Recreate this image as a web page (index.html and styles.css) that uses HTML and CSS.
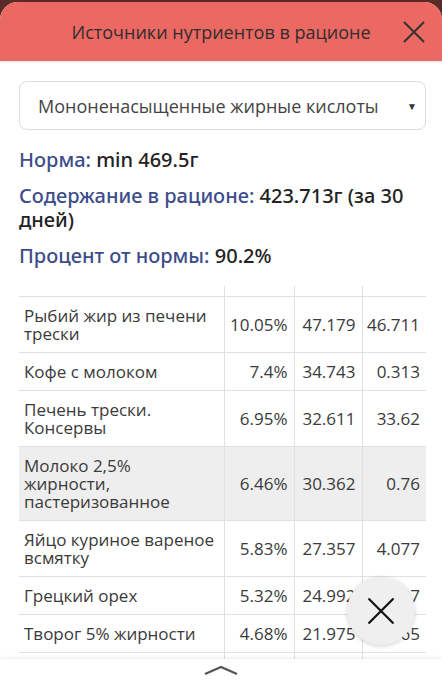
FILE: index.html
```html
<!DOCTYPE html>
<html lang="ru">
<head>
<meta charset="utf-8">
<title>Источники нутриентов в рационе</title>
<link rel="stylesheet" href="styles.css">
</head>
<body>
<div class="sheet">
  <header class="bar">
    <h1 class="bar-title">Источники нутриентов в рационе</h1>
    <button class="bar-close" aria-label="Закрыть">
      <svg viewBox="0 0 24 24" width="24" height="24"><path d="M2 2 L22 22 M22 2 L2 22" stroke="#333" stroke-width="2" fill="none"/></svg>
    </button>
  </header>
  <main class="content">
    <div class="select">
      <span class="select-text">Мононенасыщенные жирные кислоты</span>
      <span class="select-arrow">▼</span>
    </div>
    <p class="stat"><span class="label">Норма:</span> min 469.5г</p>
    <p class="stat"><span class="label">Содержание в рационе:</span> 423.713г (за 30 дней)</p>
    <p class="stat"><span class="label">Процент от нормы:</span> 90.2%</p>
    <table class="sources">
      <colgroup><col class="c-name"><col class="c-pct"><col class="c-a"><col class="c-b"></colgroup>
      <thead><tr><th></th><th></th><th></th><th></th></tr></thead>
      <tbody>
        <tr><td>Рыбий жир из печени трески</td><td class="num">10.05%</td><td class="num">47.179</td><td class="num">46.711</td></tr>
        <tr><td>Кофе с молоком</td><td class="num">7.4%</td><td class="num">34.743</td><td class="num">0.313</td></tr>
        <tr><td>Печень трески. Консервы</td><td class="num">6.95%</td><td class="num">32.611</td><td class="num">33.62</td></tr>
        <tr class="hl"><td>Молоко 2,5% жирности, пастеризованное</td><td class="num">6.46%</td><td class="num">30.362</td><td class="num">0.76</td></tr>
        <tr><td>Яйцо куриное вареное всмятку</td><td class="num">5.83%</td><td class="num">27.357</td><td class="num">4.077</td></tr>
        <tr><td>Грецкий орех</td><td class="num">5.32%</td><td class="num">24.992</td><td class="num">3.807</td></tr>
        <tr><td>Творог 5% жирности</td><td class="num">4.68%</td><td class="num">21.975</td><td class="num">0.765</td></tr>
        <tr class="more"><td></td><td></td><td></td><td></td></tr>
      </tbody>
    </table>
  </main>
  <button class="fab" aria-label="Закрыть">
    <svg viewBox="0 0 28 28" width="28" height="28"><path d="M1.5 1.5 L26.5 26.5 M26.5 1.5 L1.5 26.5" stroke="#111" stroke-width="2.2" fill="none"/></svg>
  </button>
  <div class="handle">
    <svg viewBox="0 0 34 10" width="34" height="10"><path d="M1 9 L17 2 L33 9" stroke="#555" stroke-width="2.2" fill="none"/></svg>
  </div>
</div>
</body>
</html>
```
FILE: styles.css
```css
html, body {
  margin: 0;
  padding: 0;
  background: #5a2a27;
  height: 100%;
  overflow: hidden;
}
body {
  font-family: "Open Sans", "Noto Sans", sans-serif;
  color: #333;
}
.sheet {
  margin-top: 2px;
  height: 678px;
  background: #fff;
  border-radius: 18px 18px 0 0;
  overflow: hidden;
  position: relative;
}
.bar {
  height: 59px;
  background: #ec6863;
  display: flex;
  align-items: center;
  justify-content: center;
  position: relative;
  box-shadow: 0 1px 2px rgba(0,0,0,0.12);
}
.bar-title {
  margin: 0;
  font-size: 18px;
  font-weight: 400;
  color: #2e2e2e;
  padding-top: 1px;
}
.bar-close {
  position: absolute;
  right: 16px;
  top: 18px;
  border: 0;
  background: none;
  padding: 0;
  width: 24px;
  height: 24px;
}
.bar-close svg { display: block; }
.content {
  padding: 20px 16px 0 19px;
}
.select {
  height: 47px;
  border: 1px solid #dcdcdc;
  border-radius: 8px;
  display: flex;
  align-items: center;
  justify-content: space-between;
  padding: 0 8px 0 18px;
}
.select-text {
  font-size: 18px;
  color: #444;
}
.select-arrow {
  font-size: 10px;
  color: #333;
}
.stat {
  margin: 0;
  font-family: "Noto Sans", "Open Sans", sans-serif;
  font-size: 20px;
  font-weight: 500;
  line-height: 24px;
  color: #222;
}
.select + .stat { margin-top: 18px; }
.stat + .stat { margin-top: 12px; }
.label { color: #3d4d8a; }
.sources {
  margin-top: 18px;
  width: 407px;
  border-collapse: collapse;
  table-layout: fixed;
  font-size: 17px;
  line-height: 18px;
  color: #3a3a3a;
}
.c-name { width: 205px; }
.c-pct { width: 70px; }
.c-a { width: 68px; }
.c-b { width: 64px; }
.sources th {
  height: 10px;
  padding: 0;
  border-left: 1px solid #e0e0e0;
  border-bottom: 1px solid #e0e0e0;
}
.sources th:first-child { border-left: 0; }
.sources td {
  padding: 9.5px 5px 9.5px 5px;
  border-left: 1px solid #e0e0e0;
  border-bottom: 1px solid #e0e0e0;
  vertical-align: middle;
  white-space: normal;
}
.sources td:first-child { border-left: 0; }
.sources td.num {
  text-align: right;
  padding-right: 6px;
  padding-left: 0;
  white-space: nowrap;
}
.sources tr.hl td { background: #eeeeee; }
.sources tr.more td { height: 18px; }
.fab {
  position: absolute;
  left: 347px;
  top: 575px;
  width: 68px;
  height: 68px;
  border-radius: 50%;
  border: 0;
  background: #efefef;
  box-shadow: 0 1px 4px rgba(0,0,0,0.18);
  display: flex;
  align-items: center;
  justify-content: center;
  padding: 0;
}
.fab svg { display: block; }
.handle {
  position: absolute;
  left: 0;
  right: 0;
  bottom: 0;
  height: 21px;
  background: #fff;
  box-shadow: 0 -2px 3px rgba(0,0,0,0.06);
  display: flex;
  justify-content: center;
  padding-top: 6px;
  box-sizing: border-box;
}
.handle svg { display: block; }
```
